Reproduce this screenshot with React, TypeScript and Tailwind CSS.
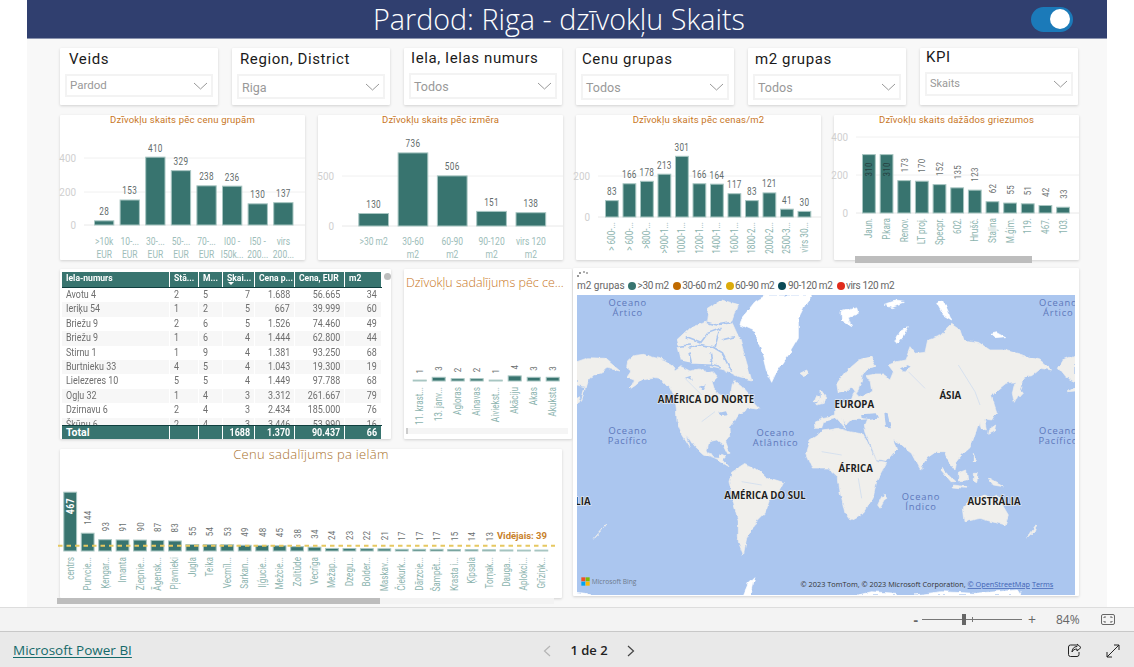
import React from "react"

const BAR = "#38746f"
const BAR_EDGE = "#a8c6c2"

type Grid = { y: number; label: string }
type ChartProps = {
  values: number[]
  labels?: string[]
  x0: number
  barW: number
  step: number
  base: number
  scale: number
  grid?: Grid[]
  gridX?: number
  width: number
  height: number
  rotated?: "axis" | "all"
  labelY?: number
  inside?: number[]
  hidden?: number[]
  valueGap?: number
  children?: React.ReactNode
}

const BarSvg = ({ values, labels = [], x0, barW, step, base, scale, grid = [], gridX = 24, width, height, rotated, labelY = 0, inside = [], hidden = [], valueGap = 8, children }: ChartProps) => (
  <svg width={width} height={height} className="block overflow-visible font-['Roboto',sans-serif]">
    {grid.map((g) => (
      <g key={g.label}>
        <line x1={gridX} x2={width} y1={g.y} y2={g.y} stroke="#f0f0f0" />
        <text transform={`translate(${gridX - 8},${g.y + 4}) scale(0.9,1)`} textAnchor="end" fontSize="11" fill="#cfcfcf">{g.label}</text>
      </g>
    ))}
    <line x1={gridX} x2={width} y1={base} y2={base} stroke="#f0f0f0" />
    {values.map((v, i) => {
      const h = v * scale
      const x = x0 + i * step
      const cx = x + barW / 2
      const isInside = inside.includes(i)
      const strong = isInside && v > 400
      return (
        <g key={i}>
          <rect x={x + 0.5} y={base - h + 0.5} width={barW - 1} height={Math.max(h - 0.5, 0.5)} fill={BAR} stroke={BAR_EDGE} strokeWidth="1" />
          {rotated !== "all" ? (
            <text transform={`translate(${cx},${base - h - 5}) scale(0.82,1)`} textAnchor="middle" fontSize="10" letterSpacing="0.4" fill="#5f6b6b">{v}</text>
          ) : hidden.includes(i) ? null : (
            <text
              transform={`translate(${cx + 3.5},${isInside ? base - h + 22.5 : base - h - valueGap}) rotate(-90) scale(0.83,1)`}
              fontSize={strong ? 10.5 : 9.5}
              fontWeight={strong ? 700 : 400}
              letterSpacing="0.4"
              fill={isInside ? (strong ? "#ffffff" : "#26403f") : "#6a6f6f"}
            >
              {v}
            </text>
          )}
          {rotated && labels[i] ? (
            <text transform={`translate(${cx + 3.5},${labelY}) rotate(-90) scale(0.82,1)`} fontSize="10" textAnchor="end" fill="#8db4af">{labels[i]}</text>
          ) : null}
          {!rotated && labels[i]
            ? labels[i].split("|").map((line, j) => (
                <text key={j} transform={`translate(${cx},${labelY + j * 12.5}) scale(0.85,1)`} textAnchor="middle" fontSize="10" fill="#9dbdb9">{line}</text>
              ))
            : null}
        </g>
      )
    })}
    {children}
  </svg>
)

const Card = ({ className, children }: { className: string; children: React.ReactNode }) => (
  <div className={`bg-white rounded-[1px] shadow-[0_1px_3px_rgba(0,0,0,0.16)] ${className}`}>{children}</div>
)

const Chevron = () => (
  <svg width="15" height="8" viewBox="0 0 15 8" className="shrink-0">
    <path d="M1 1l6.5 6L14 1" fill="none" stroke="#999999" strokeWidth="1" />
  </svg>
)

const Slicer = ({ title, value, titleClass, boxClass, valueClass }: { title: string; value: string; titleClass: string; boxClass: string; valueClass: string }) => (
  <Card className="w-[158px] h-[57px] px-[5px] font-['Roboto',sans-serif]">
    <div className={`text-[15px] text-[#1a1a1a] leading-none tracking-[0.6px] ${titleClass}`}>{title}</div>
    <div className={`border-2 border-[#f3f3f3] flex items-center justify-between pl-[3px] pr-[3px] ${boxClass}`}>
      <span className={`text-[#999999] ${valueClass}`}>{value}</span>
      <Chevron />
    </div>
  </Card>
)

const ChartTitle = ({ title, className }: { title: string; className: string }) => (
  <div className={`text-center text-[9.5px] leading-none tracking-[0.2px] text-[#c8761e] font-['Roboto',sans-serif] ${className}`}>{title}</div>
)

const rows = [
  ["Avotu 4", "2", "5", "7", "1.688", "56.665", "34"],
  ["Ieriķu 54", "1", "2", "5", "667", "39.999", "60"],
  ["Briežu 9", "2", "6", "5", "1.526", "74.460", "49"],
  ["Briežu 9", "1", "6", "4", "1.444", "62.800", "44"],
  ["Stirnu 1", "1", "9", "4", "1.381", "93.250", "68"],
  ["Burtnieku 33", "4", "5", "4", "1.043", "19.300", "19"],
  ["Lielezeres 10", "5", "5", "4", "1.449", "97.788", "68"],
  ["Ogļu 32", "1", "4", "3", "3.312", "261.667", "79"],
  ["Dzirnavu 6", "2", "4", "3", "2.434", "185.000", "76"],
  ["Šķūņu 6", "2", "4", "3", "3.446", "53.990", "16"],
]

const COLS = "grid grid-cols-[107px_28px_23px_31px_39px_49px_36px] gap-x-px"

const HeadCell = ({ children }: { children: React.ReactNode }) => (
  <div className="bg-[#38746f] pl-[4px] overflow-hidden whitespace-nowrap">
    <span className="inline-block origin-left scale-x-[0.9]">{children}</span>
  </div>
)

const Table = () => (
  <Card className="relative w-[331px] h-[170px] pl-[2px] pt-[3px] font-['Roboto',sans-serif]">
    <div className="absolute right-[0px] top-[4px] w-[7px] h-[7px] rounded-full bg-[#bdbdbd]" />
    <div className={`${COLS} w-[320px] h-[16px] border-b border-[#103f3f] text-white text-[9.5px] font-bold leading-[12px]`}>
      <HeadCell>Iela-numurs</HeadCell>
      <HeadCell>Stā...</HeadCell>
      <HeadCell>M...</HeadCell>
      <div className="bg-[#38746f] pl-[4px] leading-[9px] pt-[1px] flex flex-col overflow-hidden whitespace-nowrap">
        <span className="inline-block origin-left scale-x-[0.9]">Skai...</span>
        <svg width="6" height="3" viewBox="0 0 6 3" className="ml-[1px] shrink-0"><path d="M0 0h6L3 3z" fill="#fff" /></svg>
      </div>
      <HeadCell>Cena p...</HeadCell>
      <HeadCell>Cena, EUR</HeadCell>
      <HeadCell>m2</HeadCell>
    </div>
    <div className="w-[320px] h-[137px] overflow-hidden text-[10.5px] text-[#6e6e6e] leading-[14.4px]">
      {rows.map((r, i) => (
        <div key={i} className={COLS}>
          {r.map((c, j) => (
            <div
              key={j}
              className={`h-[14.4px] whitespace-nowrap ${i % 2 === 1 ? "bg-[#f7f7f7]" : "bg-white"} ${j < 3 ? "text-left pl-[4px]" : "text-right pr-[4px]"}`}
            >
              <span className={`inline-block scale-x-[0.85] ${j < 3 ? "origin-left" : "origin-right"}`}>{c}</span>
            </div>
          ))}
        </div>
      ))}
    </div>
    <div className={`${COLS} w-[320px] h-[14px] border-t border-[#103f3f] text-white text-[10.5px] font-bold leading-[13px]`}>
      <div className="bg-[#38746f] pl-[4px]">Total</div>
      <div className="bg-[#38746f]" />
      <div className="bg-[#38746f]" />
      {["1688", "1.370", "90.437", "66"].map((t) => (
        <div key={t} className="bg-[#38746f] text-right pr-[4px]">
          <span className="inline-block origin-right scale-x-[0.85]">{t}</span>
        </div>
      ))}
    </div>
  </Card>
)

const LAND = "#f0efec"
const SEA = "#abc6ef"

const land = [
  // North America
  "M155 290L175 272L205 268L240 278L268 285L292 300L300 318L318 305L345 318L372 312L395 325L415 320L428 335L412 352L420 380L440 392L452 402L468 385L472 360L478 345L500 362L520 385L535 410L556 432L540 432L520 428L510 442L490 450L478 470L462 490L464 515L452 530L465 565L458 566L445 540L425 525L402 530L396 555L412 578L432 580L440 565L452 570L445 585L462 605L440 592L415 580L385 570L358 545L335 510L345 545L320 505L306 470L304 430L300 400L285 370L262 345L235 340L200 345L180 362L165 372L178 345L158 338L170 320L152 305Z",
  // Arctic islands, cut up by the channels below
  "M305 228L345 190L395 170L400 130L440 105L488 118L470 170L495 225L530 345L490 335L440 310L380 298L320 290Z",
  "M500 385L522 395L535 420L515 410Z",
  // South America
  "M470 622L510 596L545 612L575 640L625 655L612 680L585 705L570 745L535 780L515 820L505 870L490 830L490 770L470 690L462 650Z",
  // Scandinavia
  "M790 385L785 355L815 315L850 285L890 275L905 300L880 310L862 330L858 355L845 385L830 365L815 378Z",
  // Eurasia
  "M720 490L718 468L742 458L782 450L782 428L806 412L830 402L838 380L852 395L880 385L890 378L885 345L870 335L900 330L925 330L945 345L955 320L940 300L965 290L990 285L1005 245L1020 265L1050 262L1058 225L1095 212L1130 178L1155 195L1165 225L1210 232L1245 255L1290 255L1340 270L1395 285L1430 315L1395 310L1370 330L1345 345L1340 370L1318 415L1312 385L1320 350L1290 355L1265 375L1250 395L1265 440L1250 465L1228 462L1234 495L1215 490L1212 470L1200 510L1188 545L1160 570L1145 590L1140 618L1118 585L1108 560L1082 560L1060 575L1035 608L1012 565L990 548L975 535L955 525L965 555L935 590L905 585L872 500L868 480L875 462L830 465L815 480L800 460L812 490L785 460L745 470L740 490Z",
  // Africa
  "M695 565L705 525L745 498L790 490L825 500L868 508L905 590L935 595L905 650L895 695L870 740L825 765L810 745L795 680L790 640L760 612L715 612Z",
  // Australia
  "M1165 730L1185 705L1230 690L1250 700L1265 690L1300 750L1290 780L1250 770L1215 760L1170 770Z",
  "M925 685L932 700L915 730L908 720Z",
  "M738 375L752 395L748 415L728 420L738 400Z",
  "M725 392L735 398L730 412L718 410Z",
  "M675 325L695 315L703 328L688 335Z",
  // islands east
  "M1100 610L1140 650L1125 650L1098 618Z",
  "M1150 625L1175 615L1178 645L1150 648Z",
  "M1135 660L1175 665L1175 670L1135 666Z",
  "M1195 565L1205 590L1195 592Z",
  "M1195 625L1210 625L1205 650L1195 645Z",
  "M1240 640L1285 665L1255 660Z",
  "M1240 495L1262 480L1258 498L1238 508Z",
  "M1328 365L1345 385L1335 395L1322 385Z",
  "M1038 600L1045 610L1038 615Z",
  // NZ
  "M1385 780L1378 800L1355 822L1370 800Z",
  "M92 780L78 800L58 820L76 798Z",
  // wrapped Chukotka and Alaska
  "M6 290L40 278L90 280L135 318L100 310L70 325L40 340L25 390L18 410L30 365L6 360Z",
  "M1500 270L1465 285L1450 310L1470 335L1500 350Z",
  "M1500 365L1480 380L1500 378Z",
  "M6 400L15 395L10 412L6 415Z",
]

const channels =
  "M300 285L345 295L412 298L438 305 M340 250L372 238L412 245L440 262L470 320 M335 215L378 232L398 205L440 190 M395 172L425 180L472 172 M420 245L432 200 M345 262L352 292 M440 225L480 215 M405 262L412 296 M300 245L345 240"

const ice = [
  "M500 160L540 110L570 92L710 92L690 120L670 160L670 220L640 270L600 330L590 352L575 320L560 260L540 200L495 180Z",
  "M798 140L845 128L850 145L820 158L830 185L800 165Z",
  "M960 230L975 200L1000 188L985 215L965 238Z",
  "M1085 115L1105 108L1120 140L1130 165L1105 150Z",
  "M1245 205L1265 200L1292 215L1260 218Z",
  "M925 118L960 108L985 112L950 125Z",
  "M505 990L520 955L540 935L528 990Z",
  "M850 990L890 980L960 985L965 990Z",
  "M1020 990L1100 980L1200 985L1330 975L1340 990Z",
  "M6 982L30 985L45 990L6 990Z",
]

const Oceano = ({ x, y, a, b }: { x: number; y: number; a: string; b: string }) => (
  <text x={x} textAnchor="middle" fontSize="28" letterSpacing="2.5" fill="#5d78bb">
    <tspan x={x} y={y}>{a}</tspan>
    <tspan x={x} y={y + 30}>{b}</tspan>
  </text>
)

const Continent = ({ x, y, t }: { x: number; y: number; t: string }) => (
  <text x={x} y={y} textAnchor="middle" fontSize="29" fontWeight="700" fill="#1e1e1e" stroke="#f5f5f3" strokeWidth="3" paintOrder="stroke">{t}</text>
)

const WorldMap = () => (
  <svg width="498" height="300" viewBox="6 90 1494 900" className="block font-['Open_Sans',sans-serif]">
    <defs>
      {/* wobble the hand-drawn outlines so the coasts don't look like polygons */}
      <filter id="coast" x="-2%" y="-2%" width="104%" height="104%">
        <feTurbulence type="fractalNoise" baseFrequency="0.035" numOctaves="3" seed="4" />
        <feDisplacementMap in="SourceGraphic" scale="14" xChannelSelector="R" yChannelSelector="G" />
        <feGaussianBlur stdDeviation="1.4" />
      </filter>
    </defs>
    <rect x="6" y="90" width="1494" height="900" fill={SEA} />
    <g filter="url(#coast)">
      {land.map((d) => (
        <path key={d} d={d} fill={LAND} stroke={LAND} strokeWidth="2" strokeLinejoin="round" />
      ))}
      <path d={channels} fill="none" stroke={SEA} strokeWidth="5" />
      {ice.map((d) => (
        <path key={d} d={d} fill="#ffffff" stroke="#ffffff" strokeWidth="2" strokeLinejoin="round" />
      ))}
      {/* inland water */}
      <path d="M858 448L905 445L912 458L880 462L860 460Z M925 445L938 448L948 490L930 488Z M372 362L395 355L385 380Z M975 310L1000 300L1010 305L985 318Z M330 335L345 330L350 345Z M430 440L450 436L455 448L435 450Z" fill={SEA} />
    </g>
    <path d="M1150 300L1200 380L1215 420 M1000 320L1050 370 M850 640L860 700 M740 560L800 570 M500 650L560 660 M330 340L380 390 M420 440L380 470" fill="none" stroke="#c9d9f0" strokeWidth="2" />
    <Oceano x={158} y={123} a="Oceano" b="Ártico" />
    <Oceano x={1450} y={123} a="Oceano" b="Ártico" />
    <Oceano x={158} y={507} a="Oceano" b="Pacífico" />
    <Oceano x={1450} y={507} a="Oceano" b="Pacífico" />
    <Oceano x={602} y={513} a="Oceano" b="Atlântico" />
    <Oceano x={1038} y={705} a="Oceano" b="Índico" />
    <Continent x={393} y={413} t="AMÉRICA DO NORTE" />
    <Continent x={838} y={428} t="EUROPA" />
    <Continent x={1126} y={403} t="ÁSIA" />
    <Continent x={842} y={620} t="ÁFRICA" />
    <Continent x={570} y={701} t="AMÉRICA DO SUL" />
    <Continent x={1257} y={721} t="AUSTRÁLIA" />
    <Continent x={24} y={721} t="LIA" />
    {/* bing logo */}
    <rect x="19" y="937" width="12" height="12" fill="#f25022" />
    <rect x="32" y="937" width="12" height="12" fill="#7fba00" />
    <rect x="19" y="950" width="12" height="12" fill="#00a4ef" />
    <rect x="32" y="950" width="12" height="12" fill="#ffb900" />
    <text x="50" y="958" fontSize="20" fill="#6d7a8c">Microsoft Bing</text>
    <text x="1435" y="966" textAnchor="end" fontSize="22" fill="#333333">
      © 2023 TomTom, © 2023 Microsoft Corporation, <tspan fill="#3f63b5" textDecoration="underline">© OpenStreetMap</tspan>  <tspan fill="#3f63b5" textDecoration="underline">Terms</tspan>
    </text>
  </svg>
)

const legend = [
  { c: "bg-[#38746f]", t: ">30 m2" },
  { c: "bg-[#c06a00]", t: "30-60 m2" },
  { c: "bg-[#dbab0b]", t: "60-90 m2" },
  { c: "bg-[#0a4a56]", t: "90-120 m2" },
  { c: "bg-[#e02b1b]", t: "virs 120 m2" },
]

const MapCard = () => (
  <Card className="relative w-[506px] h-[328px] px-[4px] font-['Roboto',sans-serif]">
    <svg width="14" height="8" className="absolute left-[3px] top-[2px]">
      <circle cx="2" cy="6" r="1" fill="#777" /><circle cx="4" cy="3" r="1" fill="#777" /><circle cx="8" cy="2" r="1" fill="#999" /><circle cx="11" cy="3" r="1" fill="#999" />
    </svg>
    <div className="h-[27px] pt-[8px] flex items-center text-[10px] tracking-[-0.35px] text-[#666666]">
      <span className="w-[51px] shrink-0 whitespace-nowrap tracking-normal">m2 grupas</span>
      <div className="flex items-center gap-[4px]">
        {legend.map((l) => (
          <div key={l.t} className="flex items-center gap-[1.5px] whitespace-nowrap">
            <span className={`w-[8px] h-[8px] rounded-full ${l.c}`} />
            <span>{l.t}</span>
          </div>
        ))}
      </div>
    </div>
    <WorldMap />
  </Card>
)

const streets = [
  [467, "centrs"], [144, "Purvcie..."], [93, "Ķengar..."], [91, "Imanta"], [90, "Ziepnie..."], [87, "Āgensk..."], [83, "Pļavnieki"],
  [55, "Jugla"], [54, "Teika"], [53, "Vecmīl..."], [49, "Sarkan..."], [48, "Iļģucie..."], [45, "Mežcie..."], [38, "Zolitūde"], [34, "Vecrīga"],
  [24, "Mežap..."], [23, "Dzegu..."], [22, "Bolder..."], [21, "Maskav..."], [17, "Čiekurk..."], [17, "Dārzcie..."], [17, "Šampēt..."],
  [15, "Krasta i..."], [14, "Ķīpsala"], [13, "Torņak..."], [12, "Dauga..."], [11, "Aplokci..."], [11, "Grīziņk..."],
] as [number, string][]

const Footer = () => (
  <>
    <div className="h-[24px] border-t border-[#dddddd] bg-[#f3f3f3] flex items-center justify-end font-['Open_Sans',sans-serif] text-[#666666]">
      <span className="text-[14px] font-bold leading-none mr-[4px]">-</span>
      <div className="relative w-[100px] h-px bg-[#777777]">
        <div className="absolute left-[40px] top-[-5px] w-[4px] h-[11px] bg-[#666666]" />
        <div className="absolute left-[50px] top-[-2px] w-px h-[5px] bg-[#777777]" />
      </div>
      <span className="text-[14px] leading-none ml-[6px]">+</span>
      <span className="text-[12px] ml-[20px] w-[24px]">84%</span>
      <svg width="14" height="11" viewBox="0 0 14 11" className="ml-[21px] mr-[19px]">
        <rect x="0.5" y="0.5" width="13" height="10" rx="1.5" fill="none" stroke="#666" />
        <path d="M3 4V3h2M9 3h2v1M11 7v1H9M5 8H3V7" fill="none" stroke="#666" />
      </svg>
    </div>
    <div className="flex-1 border-t border-[#c8c8c8] bg-[#e9e9e9] flex items-center justify-between px-[13px] pt-[2px] font-['Open_Sans',sans-serif]">
      <a className="w-[300px] text-[13.5px] text-[#14696a] underline underline-offset-2">Microsoft Power BI</a>
      <div className="flex items-center text-[13px] text-[#222222] ml-[44px]">
        <svg width="8" height="12" viewBox="0 0 8 12"><path d="M7 1L1.5 6 7 11" fill="none" stroke="#b5b5b5" strokeWidth="1.2" /></svg>
        <span className="mx-[19px] font-semibold">1 de 2</span>
        <svg width="8" height="12" viewBox="0 0 8 12"><path d="M1 1l5.5 5L1 11" fill="none" stroke="#444" strokeWidth="1.2" /></svg>
      </div>
      <div className="w-[300px] flex items-center justify-end gap-[24px]">
        <svg width="15" height="15" viewBox="0 0 15 15">
          <path d="M9 2H3.5A2 2 0 0 0 1.5 4v7.5a2 2 0 0 0 2 2H10a2 2 0 0 0 2-2V9" fill="none" stroke="#222" />
          <path d="M10 1l4 3.5L10 8V6C7.5 6 6 7 5 9c0-3 2-5.5 5-5.5z" fill="none" stroke="#222" />
        </svg>
        <svg width="14" height="14" viewBox="0 0 14 14" className="mr-[1px]">
          <path d="M1 13L13 1M8 1h5v5M1 8v5h5" fill="none" stroke="#222" />
        </svg>
      </div>
    </div>
  </>
)

const App = () => {
  return (
    <div className="w-[1134px] h-[667px] flex flex-col bg-white overflow-hidden">
      <div className="h-[607px] mx-[27px] bg-[#f8f8f8] flex flex-col">
        {/* Header */}
        <div className="h-[39px] shrink-0 bg-[#303f6f] border-b border-[#8a93ae] flex items-center pl-[346px] pr-[34px]">
          <h1 className="text-[28.7px] font-light leading-none whitespace-nowrap text-white font-['Open_Sans',sans-serif]">Pardod: Riga - dzīvokļu Skaits</h1>
          <div className="ml-auto w-[42px] h-[25px] rounded-full bg-[#1b7ab9] flex items-center justify-end pr-[3px]">
            <div className="w-[20px] h-[20px] rounded-full bg-white" />
          </div>
        </div>

        {/* Slicers */}
        <div className="mt-[9px] ml-[33px] flex gap-[14px]">
          <Slicer title="Veids" value="Pardod" titleClass="pt-[4px] pl-[4px]" boxClass="mt-[7px] h-[23px]" valueClass="text-[11.5px] pt-[1px]" />
          <Slicer title="Region, District" value="Riga" titleClass="pt-[4px] pl-[3px]" boxClass="mt-[7px] h-[25px]" valueClass="text-[12.5px] pt-[3px]" />
          <Slicer title="Iela, Ielas numurs" value="Todos" titleClass="pt-[3px] pl-[2px]" boxClass="mt-[7px] h-[26px]" valueClass="text-[12.5px] pt-[3px]" />
          <Slicer title="Cenu grupas" value="Todos" titleClass="pt-[4px] pl-[1px]" boxClass="mt-[7px] h-[26px]" valueClass="text-[12.5px] pt-[3px]" />
          <Slicer title="m2 grupas" value="Todos" titleClass="pt-[4px] pl-[2px]" boxClass="mt-[7px] h-[26px]" valueClass="text-[12.5px] pt-[3px]" />
          <Slicer title="KPI" value="Skaits" titleClass="pt-[2px] pl-[1px]" boxClass="mt-[7px] h-[24px]" valueClass="text-[11px] pt-[1px]" />
        </div>

        {/* Charts row */}
        <div className="mt-[10px] ml-[33px] flex gap-[13px]">
          <Card className="w-[245px] h-[145px]">
            <ChartTitle title="Dzīvokļu skaits pēc cenu grupām" className="h-[10px]" />
            <div className="mt-[-10px]">
              <BarSvg
                width={245}
                height={145}
                values={[28, 153, 410, 329, 238, 236, 130, 137]}
                labels={[">10k|EUR", "10-...|EUR", "30-...|EUR", "50-...|EUR", "70-...|EUR", "l00 -|l50k...", "l50 -|200...", "virs|200..."]}
                x0={34}
                barW={20.3}
                step={25.6}
                base={110}
                scale={0.1667}
                grid={[{ y: 43, label: "400" }, { y: 77, label: "200" }, { y: 110, label: "0" }]}
                labelY={130}
              />
            </div>
          </Card>
          <Card className="w-[245px] h-[145px]">
            <ChartTitle title="Dzīvokļu skaits pēc izmēra" className="h-[10px]" />
            <div className="mt-[-10px]">
              <BarSvg
                width={245}
                height={145}
                values={[130, 736, 506, 151, 138]}
                labels={[">30 m2", "30-60|m2", "60-90|m2", "90-120|m2", "virs 120|m2"]}
                x0={40.3}
                barW={30.7}
                step={39.3}
                base={111}
                scale={0.1}
                gridX={24}
                grid={[{ y: 61, label: "500" }, { y: 111, label: "0" }]}
                labelY={130}
              />
            </div>
          </Card>
          <Card className="w-[245px] h-[145px]">
            <ChartTitle title="Dzīvokļu skaits pēc cenas/m2" className="h-[10px]" />
            <div className="mt-[-10px]">
              <BarSvg
                width={245}
                height={145}
                values={[83, 166, 178, 213, 301, 166, 164, 117, 83, 121, 41, 30]}
                labels={["> 600-...", "> 600-...", ">800-...", ">900-1...", "1000-1...", "1200-1...", "1400-1...", "1600-1...", "1800-2...", "2000-2...", "2500-3...", "virs 30..."]}
                x0={29}
                barW={13.8}
                step={17.5}
                base={102}
                scale={0.2033}
                gridX={22}
                grid={[{ y: 61, label: "200" }, { y: 102, label: "0" }]}
                rotated="axis"
                labelY={107}
              />
            </div>
          </Card>
          <Card className="w-[245px] h-[145px]">
            <ChartTitle title="Dzīvokļu skaits dažādos griezumos" className="h-[10px]" />
            <div className="mt-[-10px]">
              <BarSvg
                width={245}
                height={145}
                values={[310, 310, 173, 170, 152, 135, 123, 62, 55, 51, 42, 33]}
                labels={["Jaun.", "P.kara", "Renov.", "LT proj.", "Specpr.", "602.", "Hrušč.", "Staļina", "M.ģim.", "119.", "467.", "103."]}
                x0={28}
                barW={13.8}
                step={17.65}
                base={98}
                scale={0.19}
                gridX={22}
                grid={[{ y: 22, label: "400" }, { y: 60, label: "200" }, { y: 98, label: "0" }]}
                rotated="all"
                inside={[0, 1]}
                labelY={103}
              >
                <rect x="21" y="141" width="177" height="7" fill="#bdbdbd" />
              </BarSvg>
            </div>
          </Card>
        </div>

        {/* Lower area */}
        <div className="mt-[8px] ml-[33px] flex gap-px">
          <div className="w-[512px] pt-px flex flex-col">
            <div className="flex gap-[13px]">
              <Table />
              <Card className="w-[168px] h-[170px]">
                <div className="pl-[2px] pt-[8px] h-[21px] text-[12.5px] leading-none font-light text-[#c8761e] font-['Open_Sans',sans-serif] whitespace-nowrap">
                  Dzīvokļu sadalījums pēc ce...
                </div>
                <div className="mt-[-21px]">
                  <BarSvg
                    width={168}
                    height={170}
                    values={[1, 3, 2, 2, 1, 4, 3, 3]}
                    labels={["11. krast...", "13. janv...", "Agloras", "Ainavas", "Aiviekst...", "Akāciju", "Akas", "Akuksta"]}
                    x0={8.7}
                    barW={14}
                    step={19}
                    base={112}
                    scale={1.4}
                    gridX={168}
                    rotated="all"
                    valueGap={6}
                    labelY={118}
                  >
                    <rect x="2" y="159" width="162" height="6" fill="#f5f5f5" />
                    <rect x="2" y="159" width="2" height="6" fill="#cccccc" />
                  </BarSvg>
                </div>
              </Card>
            </div>
            <Card className="mt-[10px] w-[502px] h-[149px]">
              <div className="text-center text-[13px] leading-none font-light tracking-[0.3px] text-[#a8702a] font-['Open_Sans',sans-serif] h-[10px] mt-[-1px]">
                Cenu sadalījums pa ielām
              </div>
              <div className="mt-[-9px]">
                <BarSvg
                  width={502}
                  height={149}
                  values={streets.map((s) => s[0])}
                  labels={streets.map((s) => s[1])}
                  x0={3.3}
                  barW={13.8}
                  step={17.45}
                  base={102}
                  scale={0.127}
                  gridX={502}
                  rotated="all"
                  inside={[0]}
                  hidden={[25, 26, 27]}
                  labelY={108}
                >
                  <line x1="-2" x2="495" y1="96.7" y2="96.7" stroke="#e6c860" strokeWidth="2" strokeDasharray="4.5 4" />
                  <text x="487" y="90" textAnchor="end" fontSize="9.5" fontWeight="700" fill="#c8812a">Vidējais: 39</text>
                  <rect x="-3" y="149" width="497" height="6" fill="#f3f3f3" />
                  <rect x="-3" y="149" width="323" height="6" fill="#bdbdbd" />
                </BarSvg>
              </div>
            </Card>
          </div>
          <MapCard />
        </div>
      </div>

      <Footer />
    </div>
  )
}

export default App
